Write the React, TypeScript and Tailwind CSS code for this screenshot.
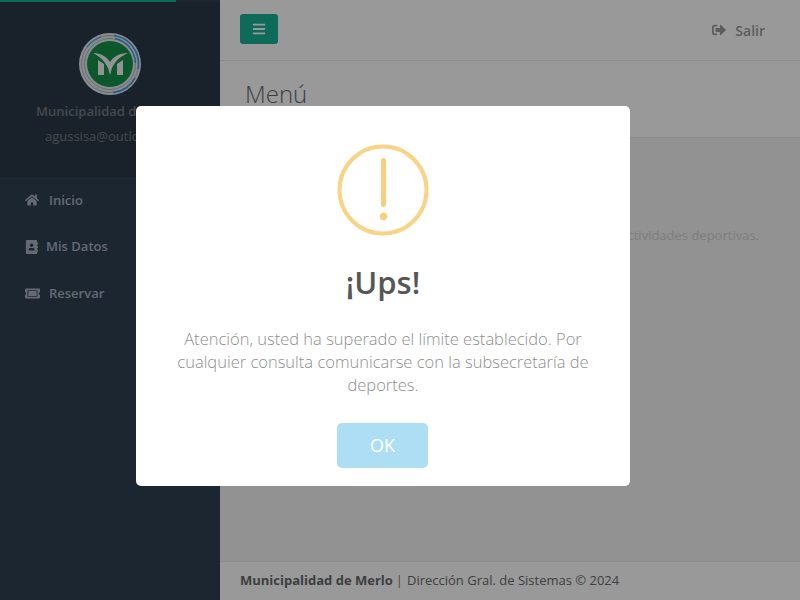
import { FaAddressBook, FaBars, FaHome, FaSignOutAlt, FaTicketAlt } from "react-icons/fa";

const navItems = [
  { label: "Inicio", icon: FaHome, iconSize: "text-[14px]", gap: "gap-[10px]" },
  { label: "Mis Datos", icon: FaAddressBook, iconSize: "text-[14px]", gap: "gap-[7px]" },
  { label: "Reservar", icon: FaTicketAlt, iconSize: "text-[15px]", gap: "gap-[9px]" },
];

function Logo() {
  return (
    <svg viewBox="0 0 62 62" className="h-[62px] w-[62px]">
      <circle cx="31" cy="31" r="31" fill="#e6ebf0" />
      <circle cx="31" cy="31" r="28.5" fill="none" stroke="#a9b5c0" strokeWidth="1" />
      <circle cx="31" cy="31" r="25.5" fill="none" stroke="#a9b5c0" strokeWidth="1" />
      <path d="M35 2.5 A28.5 28.5 0 0 1 59 36" fill="none" stroke="#3f9be0" strokeWidth="1.6" />
      <path d="M36 5.5 A26 26 0 0 1 56.5 30" fill="none" stroke="#3f9be0" strokeWidth="1.4" />
      <path d="M56 45 A28.5 28.5 0 0 1 34 59.5" fill="none" stroke="#3f9be0" strokeWidth="1.6" />
      <path d="M8 14 A28.5 28.5 0 0 1 22 4" fill="none" stroke="#3f9be0" strokeWidth="1.2" />
      <circle cx="31" cy="31" r="23" fill="#14924a" />
      <path d="M14 20 C22 20 28 24 31 29 C34 24 40 20 49 20 C42 23 36 28 33 35 L31 42 L29 35 C26 28 20 23 14 20 Z" fill="#f6f6f6" />
      <path d="M19 27 L25 31 L25 42 L19 42 Z M38 31 L44 27 L44 42 L38 42 Z" fill="#f6f6f6" />
    </svg>
  );
}

export default function App() {
  return (
    <div className="relative flex h-[600px] w-[800px] overflow-hidden bg-[#f3f3f4] font-['Open_Sans',sans-serif] text-[13px] text-[#676a6c]">
      <aside className="flex w-[220px] shrink-0 flex-col bg-[#2f4050]">
        <div className="h-[2px] w-[176px] bg-[#1ab394]" />
        <div className="flex h-[175px] flex-col items-center bg-[#2a3a49] pt-[31px]">
          <Logo />
          <div className="mt-[6px] whitespace-nowrap text-[13px] leading-[20px] font-semibold text-[#757a80]">
            Municipalidad de Merlo
          </div>
          <div className="mt-[5px] mr-[4px] whitespace-nowrap text-[13px] leading-[20px] text-[#757a80]">
            agussisa@outlook.es
          </div>
        </div>
        <nav className="flex flex-col">
          {navItems.map((item) => (
            <a
              key={item.label}
              className={`flex h-[46.5px] items-center pl-[25px] font-semibold text-[#a7b1c2] ${item.gap}`}
            >
              <item.icon className={item.iconSize} />
              {item.label}
            </a>
          ))}
        </nav>
      </aside>

      <main className="flex min-w-0 flex-1 flex-col">
        <header className="flex h-[61px] shrink-0 items-center justify-between border-b border-[#e7eaec] bg-white pr-[35px] pl-[20px]">
          <button className="mb-[2px] flex h-[30px] w-[38px] items-center justify-center rounded-[3px] bg-[#1ab394] text-[14px] text-white">
            <FaBars />
          </button>
          <a className="flex items-center gap-[9px] text-[14px] font-semibold text-[#999c9e]">
            <FaSignOutAlt className="text-[14px]" />
            Salir
          </a>
        </header>
        <div className="h-[77px] shrink-0 border-b border-[#e7eaec] bg-white pt-[16px] pl-[25px]">
          <h2 className="text-[24px] leading-[34px] font-light text-[#676a6c]">Menú</h2>
        </div>
        <div className="flex-1 pt-[87px] pr-[41px] text-right text-[13px] leading-[20px] text-[#d2d2d3]">
          Reservas de actividades deportivas.
        </div>
        <footer className="flex h-[39px] shrink-0 items-center border-t border-[#e7eaec] bg-white pl-[20px]">
          <strong className="font-bold">Municipalidad de Merlo</strong>
          <span className="mr-[4px] ml-[3px] text-[#b3752f]">|</span>
          Dirección Gral. de Sistemas © 2024
        </footer>
      </main>

      <div className="absolute inset-0 bg-black/40">
        <div className="absolute top-[106px] left-[136px] flex h-[380px] w-[494px] flex-col items-center rounded-[5px] bg-white">
          <svg viewBox="0 0 92 92" className="mt-[38px] h-[92px] w-[92px]">
            <circle cx="46" cy="46" r="43.5" fill="none" stroke="#f8d486" strokeWidth="4" />
            <rect x="44" y="14" width="5" height="49" rx="2.5" fill="#f8cf7f" />
            <circle cx="46.5" cy="72.5" r="3.7" fill="#f8cf7f" />
          </svg>
          <h2 className="mt-[26px] text-[31px] leading-[40px] font-semibold text-[#575757]">¡Ups!</h2>
          <p className="mt-[25px] w-[430px] text-center text-[16.5px] leading-[23px] font-light text-[#8f8f8f]">
            Atención, usted ha superado el límite establecido. Por cualquier consulta comunicarse con la subsecretaría de deportes.
          </p>
          <button className="mt-[27px] mr-[1px] h-[45px] w-[91px] rounded-[5px] bg-[#aedef4] text-[18px] font-medium text-white">
            OK
          </button>
        </div>
      </div>
    </div>
  );
}
